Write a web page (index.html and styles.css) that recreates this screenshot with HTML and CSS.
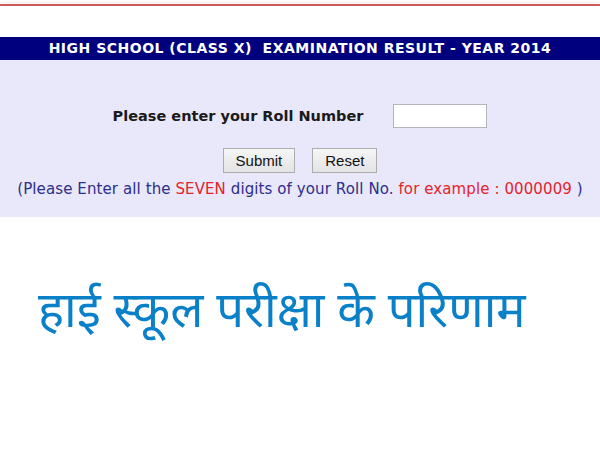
FILE: index.html
```html
<!DOCTYPE html>
<html lang="en">
<head>
    <meta charset="UTF-8">
    <meta name="viewport" content="width=device-width, initial-scale=1.0">
    <title>High School Result 2014</title>
    <link rel="stylesheet" href="styles.css">
</head>
<body>

<div class="top-line"></div>

<div class="result-box">
    <div class="title-bar">HIGH SCHOOL (CLASS X)&nbsp; EXAMINATION RESULT - YEAR 2014</div>
    <form class="roll-form" onsubmit="return false;">
        <div class="roll-row">
            <label for="roll">Please enter your Roll Number</label>
            <input type="text" id="roll" maxlength="7">
        </div>
        <div class="buttons">
            <button type="submit">Submit</button>
            <button type="reset">Reset</button>
        </div>
        <p class="note">(Please Enter all the <span class="red">SEVEN</span> digits of your Roll No. <span class="red">for example : 0000009</span> )</p>
    </form>
</div>

<h1 class="hindi">हाई स्कूल परीक्षा के परिणाम</h1>

</body>
</html>
```

FILE: styles.css
```css
body {
    margin: 0;
    padding: 0;
    background-color: #fff;
    font-family: "DejaVu Sans", Verdana, sans-serif;
}
.top-line {
    height: 2px;
    margin-top: 4px;
    background-color: #c85c5c;
    box-shadow: 0 -2px 3px rgba(200, 92, 92, 0.15);
}
.result-box {
    margin-top: 31px;
}
.title-bar {
    height: 23px;
    line-height: 23px;
    background-color: #00007f;
    color: #fff;
    font-weight: bold;
    font-size: 14px;
    letter-spacing: 0.5px;
    text-align: center;
}
.roll-form {
    margin: 0;
    height: 157px;
    background-color: #e8e8fa;
    padding-top: 44px;
    box-sizing: border-box;
}
.roll-row {
    display: flex;
    justify-content: center;
    align-items: center;
    gap: 30px;
}
.roll-row label {
    font-weight: bold;
    font-size: 14.5px;
    color: #1a1a1a;
}
.roll-row input {
    width: 94px;
    height: 24px;
    box-sizing: border-box;
    border: 1px solid #b4b4bc;
    background: #fff;
    padding: 0 3px;
}
.buttons {
    display: flex;
    justify-content: center;
    gap: 17px;
    margin-top: 20px;
}
.buttons button {
    font-family: "Liberation Sans", Arial, sans-serif;
    font-size: 15px;
    color: #111;
    padding: 0 12px;
    height: 25px;
    border: 1px solid #adadad;
    border-radius: 0;
    background: linear-gradient(#f6f6f6, #e3e3e3);
}
.note {
    margin: 7px 0 0;
    text-align: center;
    font-size: 15px;
    letter-spacing: 0.1px;
    color: #2d2d8c;
}
.red {
    color: #e4232b;
}
.hindi {
    margin: 58px 0 0 38px;
    font-weight: normal;
    font-size: 49px;
    color: #0a80c8;
    font-family: "Noto Sans", "DejaVu Sans", sans-serif;
}
```
